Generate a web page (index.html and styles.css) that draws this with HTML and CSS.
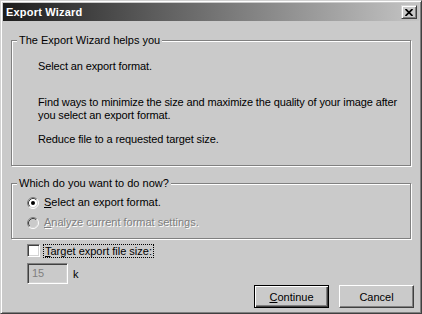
FILE: index.html
```html
<!DOCTYPE html>
<html>
<head>
<meta charset="utf-8">
<link rel="stylesheet" href="styles.css">
</head>
<body>
<div class="window">
  <div class="titlebar">
    <span class="title">Export Wizard</span>
    <span class="close" aria-label="Close">
      <svg width="8" height="7" viewBox="0 0 8 7"><path d="M0.5 0 L7.5 7 M7.5 0 L0.5 7" stroke="#000" stroke-width="1.7" fill="none"/></svg>
    </span>
  </div>
  <div class="client">
    <fieldset class="group g1">
      <legend>The Export Wizard helps you</legend>
      <div class="g1-body">
        <p class="l1">Select an export format.</p>
        <p class="l2">Find ways to minimize the size and maximize the quality of your image after<br>you select an export format.</p>
        <p class="l3">Reduce file to a requested target size.</p>
      </div>
    </fieldset>
    <fieldset class="group g2">
      <legend>Which do you want to do now?</legend>
      <div class="g2-body">
        <div class="radio-row">
          <svg class="radio" width="12" height="12" viewBox="0 0 12 12">
            <circle cx="6" cy="6" r="4.5" fill="#fff"/>
            <path d="M2.11 9.89 A5.5 5.5 0 0 1 9.89 2.11" stroke="#808080" fill="none"/>
            <path d="M9.89 2.11 A5.5 5.5 0 0 1 2.11 9.89" stroke="#fff" fill="none"/>
            <path d="M2.82 9.18 A4.5 4.5 0 0 1 9.18 2.82" stroke="#404040" fill="none"/>
            <path d="M9.18 2.82 A4.5 4.5 0 0 1 2.82 9.18" stroke="#d4d4d4" fill="none"/>
            <circle cx="6" cy="6" r="2" fill="#000"/>
          </svg>
          <span class="rlabel"><u>S</u>elect an export format.</span>
        </div>
        <div class="radio-row disabled">
          <svg class="radio" width="12" height="12" viewBox="0 0 12 12">
            <circle cx="6" cy="6" r="4.5" fill="#cacaca"/>
            <path d="M2.11 9.89 A5.5 5.5 0 0 1 9.89 2.11" stroke="#808080" fill="none"/>
            <path d="M9.89 2.11 A5.5 5.5 0 0 1 2.11 9.89" stroke="#fff" fill="none"/>
            <path d="M2.82 9.18 A4.5 4.5 0 0 1 9.18 2.82" stroke="#404040" fill="none"/>
            <path d="M9.18 2.82 A4.5 4.5 0 0 1 2.82 9.18" stroke="#d4d4d4" fill="none"/>
          </svg>
          <span class="rlabel"><u>A</u>nalyze current format settings.</span>
        </div>
      </div>
    </fieldset>
    <div class="check-row">
      <span class="checkbox"></span>
      <span class="focus"><u>T</u>arget export file size:</span>
    </div>
    <div class="size-row">
      <span class="edit">15</span>
      <span class="unit">k</span>
    </div>
    <div class="buttons">
      <span class="btn default"><u>C</u>ontinue</span>
      <span class="btn">Cancel</span>
    </div>
  </div>
</div>
</body>
</html>
```
FILE: styles.css
```css
* { box-sizing: border-box; }
html, body { margin: 0; padding: 0; }
body {
  width: 422px;
  height: 314px;
  background: #cacaca;
  font-family: "Liberation Sans", Arial, sans-serif;
  font-size: 11px;
  color: #000;
  overflow: hidden;
}
.window {
  width: 422px;
  height: 314px;
  border: 1px solid;
  border-color: #d2d2d2 #404040 #404040 #d2d2d2;
  box-shadow: inset 1px 1px #fff, inset -1px -1px #808080;
  padding: 2px;
  display: flex;
  flex-direction: column;
  background: #cacaca;
}
.titlebar {
  height: 18px;
  flex: none;
  display: flex;
  align-items: center;
  justify-content: space-between;
  background: linear-gradient(90deg, #1c1c1c 0%, #5a5a5a 35%, #c4c4c4 100%);
  padding: 0 2px 0 3px;
}
.title {
  color: #fff;
  font-weight: bold;
  font-size: 11px;
  letter-spacing: 0.2px;
}
.close {
  width: 16px;
  height: 14px;
  border: 1px solid;
  border-color: #d2d2d2 #404040 #404040 #d2d2d2;
  box-shadow: inset 1px 1px #fff, inset -1px -1px #808080;
  background: #cacaca;
  display: flex;
  align-items: center;
  justify-content: center;
}
.close svg { display: block; margin-left: 0px; }
.client {
  flex: 1;
  display: flex;
  flex-direction: column;
  padding: 13px 8px 0;
}
.group {
  margin: 0;
  padding: 0;
  min-width: 0;
  border: 1px solid #808080;
  box-shadow: inset 1px 1px #fff, 1px 1px #fff;
}
.group legend {
  padding: 0 2px;
  margin-left: 5px;
  line-height: 13px;
  background: #cacaca;
}
.g1-body {
  padding: 13px 4px 19px 26px;
  white-space: nowrap;
  letter-spacing: -0.12px;
}
.g1-body p { margin: 0; line-height: 13px; }
.g1-body .l2 { margin-top: 23px; }
.g1-body .l3 { margin-top: 11px; }
.g2 { margin-top: 11px; }
.g2-body { padding: 6px 4px 9px 15px; }
.radio-row {
  height: 13px;
  display: flex;
  align-items: center;
  line-height: 13px;
}
.radio-row + .radio-row { margin-top: 7px; }
.radio { flex: none; display: block; }
.rlabel { margin-left: 5px; }
.disabled .rlabel { color: #808080; text-shadow: 1px 1px 0 #fff; }
.check-row {
  margin-top: 5px;
  padding-left: 16px;
  height: 14px;
  display: flex;
  align-items: flex-start;
}
.checkbox {
  width: 13px;
  height: 13px;
  flex: none;
  border: 1px solid;
  border-color: #808080 #fff #fff #808080;
  box-shadow: inset 1px 1px #404040, inset -1px -1px #d4d4d4;
  background: #fff;
}
.focus {
  margin-left: 3px;
  border: 1px dotted #000;
  padding: 0 1px;
  height: 14px;
  line-height: 12px;
}
.size-row {
  margin-top: 5px;
  padding-left: 16px;
  display: flex;
  align-items: center;
}
.edit {
  width: 41px;
  height: 21px;
  border: 1px solid;
  border-color: #808080 #fff #fff #808080;
  box-shadow: inset 1px 1px #404040, inset -1px -1px #d4d4d4;
  background: #cacaca;
  color: #808080;
  padding-left: 4px;
  line-height: 19px;
}
.unit { margin-left: 5px; }
.buttons {
  margin-top: 1px;
  margin-right: -3px;
  display: flex;
  justify-content: flex-end;
  gap: 10px;
}
.btn {
  width: 75px;
  height: 23px;
  border: 1px solid;
  border-color: #fff #404040 #404040 #fff;
  box-shadow: inset -1px -1px #808080;
  background: #cacaca;
  display: flex;
  align-items: center;
  justify-content: center;
}
.btn.default {
  border-color: #000;
  box-shadow: inset 1px 1px #fff, inset -1px -1px #404040, inset -2px -2px #808080;
}
```
